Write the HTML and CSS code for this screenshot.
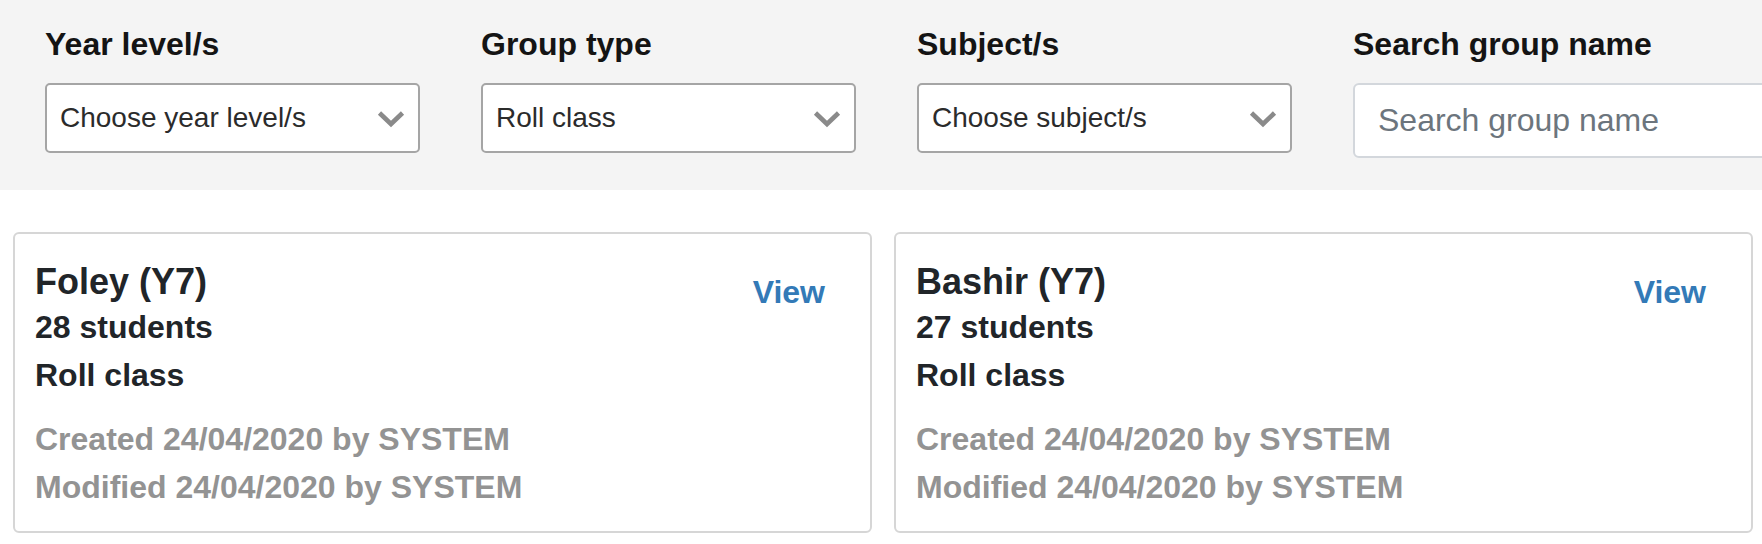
FILE: index.html
```html
<!DOCTYPE html>
<html lang="en">
<head>
<meta charset="utf-8">
<title>Groups</title>
<link rel="stylesheet" href="styles.css">
</head>
<body>
<div class="filters">
  <div class="filter">
    <div class="filter-label">Year level/s</div>
    <div class="select">
      <span>Choose year level/s</span>
      <svg class="chevron" width="28" height="18" viewBox="0 0 28 18"><polyline points="2.5,3 14,14 25.5,3" fill="none" stroke="#8a8a8a" stroke-width="4.6"/></svg>
    </div>
  </div>
  <div class="filter">
    <div class="filter-label">Group type</div>
    <div class="select">
      <span>Roll class</span>
      <svg class="chevron" width="28" height="18" viewBox="0 0 28 18"><polyline points="2.5,3 14,14 25.5,3" fill="none" stroke="#8a8a8a" stroke-width="4.6"/></svg>
    </div>
  </div>
  <div class="filter">
    <div class="filter-label">Subject/s</div>
    <div class="select">
      <span>Choose subject/s</span>
      <svg class="chevron" width="28" height="18" viewBox="0 0 28 18"><polyline points="2.5,3 14,14 25.5,3" fill="none" stroke="#8a8a8a" stroke-width="4.6"/></svg>
    </div>
  </div>
  <div class="filter filter-search">
    <div class="filter-label">Search group name</div>
    <input class="search" type="text" placeholder="Search group name">
  </div>
</div>

<div class="cards">
  <div class="card">
    <div class="card-info">
      <h3 class="card-title">Foley (Y7)</h3>
      <div class="card-line">28 students</div>
      <div class="card-line">Roll class</div>
      <div class="card-meta">
        <div class="card-line">Created 24/04/2020 by SYSTEM</div>
        <div class="card-line">Modified 24/04/2020 by SYSTEM</div>
      </div>
    </div>
    <a class="view" href="#">View</a>
  </div>
  <div class="card">
    <div class="card-info">
      <h3 class="card-title">Bashir (Y7)</h3>
      <div class="card-line">27 students</div>
      <div class="card-line">Roll class</div>
      <div class="card-meta">
        <div class="card-line">Created 24/04/2020 by SYSTEM</div>
        <div class="card-line">Modified 24/04/2020 by SYSTEM</div>
      </div>
    </div>
    <a class="view" href="#">View</a>
  </div>
</div>
</body>
</html>
```

FILE: styles.css
```css
html, body {
  margin: 0;
  padding: 0;
  background: #ffffff;
  overflow: hidden;
}

body {
  font-family: "Liberation Sans", Arial, sans-serif;
  color: #212529;
}

.filters {
  background: #f4f4f4;
  height: 190px;
  box-sizing: border-box;
  padding: 25px 0 0 45px;
  display: flex;
  gap: 61px;
  overflow: hidden;
}

.filter {
  flex: none;
  width: 375px;
}

.filter-search {
  width: 460px;
}

.filter-label {
  font-weight: bold;
  font-size: 32px;
  line-height: 38px;
  color: #141414;
  margin-bottom: 20px;
  white-space: nowrap;
}

.select {
  height: 70px;
  box-sizing: border-box;
  border: 2px solid #a5a5a5;
  border-radius: 5px;
  background: #ffffff;
  display: flex;
  align-items: center;
  justify-content: space-between;
  padding: 0 13px 0 13px;
  font-size: 28px;
  color: #2b2b2b;
}

.chevron {
  display: block;
  margin-top: 2px;
}

.search {
  display: block;
  margin-top: 1px;
  height: 75px;
  width: 100%;
  box-sizing: border-box;
  border: 2px solid #d3d7dc;
  border-radius: 6px;
  background: #ffffff;
  padding: 0 23px;
  font-family: "Liberation Sans", Arial, sans-serif;
  font-size: 32px;
  color: #495057;
  outline: none;
}

.search::placeholder {
  color: #6c757d;
  opacity: 1;
}

.cards {
  display: flex;
  gap: 22px;
  padding: 42px 9px 0 13px;
}

.card {
  flex: 1;
  height: 301px;
  box-sizing: border-box;
  border: 2px solid #d6d6d6;
  border-radius: 6px;
  padding: 26px 0 0 20px;
  display: flex;
  align-items: flex-start;
}

.card-info {
  flex: 1;
}

.card-title {
  margin: 0;
  font-size: 36px;
  line-height: 43px;
  font-weight: bold;
  color: #212529;
}

.card-line {
  font-size: 32px;
  line-height: 48px;
  font-weight: bold;
  color: #212529;
  white-space: nowrap;
}

.card-meta {
  margin-top: 16px;
}

.card-meta .card-line {
  color: #939393;
}

.view {
  font-size: 32px;
  line-height: 42px;
  font-weight: bold;
  color: #337ab7;
  text-decoration: none;
  padding: 11px 45px 0 24px;
}
```
